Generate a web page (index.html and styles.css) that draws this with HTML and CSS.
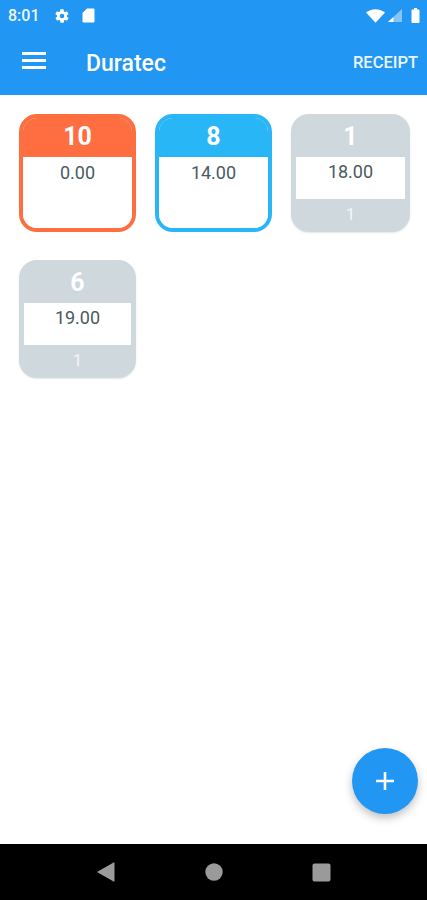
FILE: index.html
```html
<!DOCTYPE html>
<html lang="en">
<head>
<meta charset="utf-8">
<title>Duratec</title>
<link rel="stylesheet" href="styles.css">
</head>
<body>
<div class="phone">
  <header class="top">
    <div class="status">
      <span class="time">8:01</span>
      <svg class="gear" width="16" height="16" viewBox="0 0 24 24"><path fill="#fff" d="M19.4 13c.1-.3.1-.7.1-1s0-.7-.1-1l2.100-1.600c.2-.2.2-.4.1-.6l-2-3.500c-.1-.2-.4-.3-.6-.2l-2.500 1c-.5-.4-1.100-.7-1.700-1l-.4-2.700c0-.2-.2-.4-.5-.4h-4c-.3 0-.5.2-.5.4l-.4 2.700c-.6.3-1.200.6-1.700 1l-2.500-1c-.2-.1-.5 0-.6.2l-2 3.500c-.1.2-.1.4.1.6L4.600 11c0 .3-.1.7-.1 1s0 .7.1 1l-2.100 1.600c-.2.2-.2.4-.1.6l2 3.500c.1.2.4.3.6.2l2.500-1c.5.4 1.100.7 1.700 1l.4 2.700c0 .2.2.4.5.4h4c.3 0 .5-.2.5-.4l.4-2.700c.6-.3 1.200-.6 1.700-1l2.500 1c.2.1.5 0 .6-.2l2-3.500c.1-.2.1-.4-.1-.6zM12 15.500a3.500 3.500 0 1 1 0-7 3.500 3.500 0 0 1 0 7z"/></svg>
      <svg class="sd" width="13" height="15" viewBox="0 0 13 15"><path fill="#fff" d="M5 .5h6.500a1 1 0 0 1 1 1v12a1 1 0 0 1-1 1h-10a1 1 0 0 1-1-1V5z"/></svg>
      <span class="status-gap"></span>
      <svg class="wifi" width="19" height="14" viewBox="0 0 18 13"><path fill="#fff" d="M0 3.200C2.400 1.200 5.500 0 9 0s6.600 1.200 9 3.200L9 13z"/></svg>
      <svg class="signal" width="14" height="13" viewBox="0 0 13 12"><path fill="#fff" fill-opacity=".45" d="M0 12 13 0v12z"/><path fill="#fff" d="M0 12l5-4.600V12z"/></svg>
      <svg class="battery" width="9" height="15" viewBox="0 0 9 15"><path fill="#fff" d="M3 0h3v1.500h1.500a1 1 0 0 1 1 1V14a1 1 0 0 1-1 1h-6a1 1 0 0 1-1-1V2.500a1 1 0 0 1 1-1H3z"/></svg>
    </div>
    <div class="bar">
      <div class="menu"><i></i><i></i><i></i></div>
      <h1 class="title">Duratec</h1>
      <span class="action">RECEIPT</span>
    </div>
  </header>

  <main class="grid">
    <section class="card orange">
      <div class="num">10</div>
      <div class="amount">0.00</div>
    </section>
    <section class="card blue">
      <div class="num">8</div>
      <div class="amount">14.00</div>
    </section>
    <section class="card grey">
      <div class="num">1</div>
      <div class="amount">18.00</div>
      <div class="foot">1</div>
    </section>
    <section class="card grey">
      <div class="num">6</div>
      <div class="amount">19.00</div>
      <div class="foot">1</div>
    </section>
  </main>

  <button class="fab" type="button" aria-label="Add">
    <svg width="18" height="18" viewBox="0 0 18 18"><path fill="#fff" d="M7.700 0h2.600v7.700H18v2.600h-7.700V18H7.700v-7.700H0V7.700h7.700z"/></svg>
  </button>

  <nav class="nav">
    <svg width="18" height="20" viewBox="0 0 18 20"><path fill="#9a9a9a" d="M17.500 1v18a.6.6 0 0 1-.9.500L.8 10.500a.6.6 0 0 1 0-1L16.600.5a.6.6 0 0 1 .9.500z"/></svg>
    <svg width="18" height="18" viewBox="0 0 18 18"><circle cx="9" cy="9" r="8.700" fill="#9a9a9a"/></svg>
    <svg width="19" height="19" viewBox="0 0 19 19"><rect x=".5" y=".5" width="18" height="18" rx="2" fill="#9a9a9a"/></svg>
  </nav>
</div>
</body>
</html>
```
FILE: styles.css
```css
* { box-sizing: border-box; }
html, body { margin: 0; padding: 0; }
body { background: #fff; font-family: Roboto, "Liberation Sans", sans-serif; }

.phone {
  position: relative;
  width: 427px;
  height: 900px;
  display: flex;
  flex-direction: column;
  overflow: hidden;
  background: #fff;
}

.top { background: #2196f3; height: 95px; color: #fff; flex: none; }

.status {
  height: 30px;
  display: flex;
  align-items: center;
  padding: 1px 7px 0 8px;
}
.time { font-size: 16px; font-weight: 500; color: #eef6fe; width: 31px; margin-right: 15px; white-space: nowrap; }
.gear { margin-right: 12px; }
.status-gap { flex: 1; }
.wifi { margin-right: 3px; }
.signal { margin-right: 9px; }

.bar { height: 65px; display: flex; align-items: center; padding: 0 9px 4px 22px; }
.menu { width: 24px; display: flex; flex-direction: column; gap: 4.500px; margin-right: 40px; }
.menu i { display: block; height: 2.500px; background: #fff; }
.title { flex: 1; margin: 0; padding-top: 5px; font-size: 23px; font-weight: 500; line-height: 1; }
.action { padding-top: 3px; font-size: 16.500px; font-weight: 500; color: #eaf5fe; }

.grid {
  flex: 1;
  display: grid;
  grid-template-columns: repeat(2, 117px) 119px;
  grid-auto-rows: 118px;
  column-gap: 19px;
  row-gap: 28px;
  align-content: start;
  padding: 19px 0 0 19px;
}

.card {
  border: 4px solid var(--tone);
  border-radius: 18px;
  background: #fff;
  display: flex;
  flex-direction: column;
  overflow: hidden;
  text-align: center;
}
.orange { --tone: #ff6e40; }
.blue { --tone: #29b6f6; }
.grey {
  --tone: #cfd8dc;
  background: var(--tone);
  border-width: 4px 5px;
  box-shadow: 0 1px 2px rgba(0, 0, 0, .1);
}

.num {
  background: var(--tone);
  color: #fff;
  height: 39px;
  font-size: 25px;
  font-weight: 700;
  line-height: 38px;
  flex: none;
}
.amount {
  background: #fff;
  color: #4a5960;
  font-size: 18px;
  line-height: 32px;
  flex: 1;
}
.grey .amount { flex: 0 0 42px; line-height: 30px; }
.foot { color: #f3f6f7; font-size: 17px; line-height: 31px; }

.fab {
  position: absolute;
  left: 352px;
  top: 748px;
  width: 66px;
  height: 66px;
  border: 0;
  border-radius: 50%;
  padding: 0;
  background: #2196f3;
  display: flex;
  align-items: center;
  justify-content: center;
  box-shadow: 0 4px 8px rgba(0, 0, 0, .25);
}

.nav {
  height: 56px;
  flex: none;
  background: #000;
  display: flex;
  align-items: center;
  padding: 0 96px 0 97px;
  justify-content: space-between;
}
```
